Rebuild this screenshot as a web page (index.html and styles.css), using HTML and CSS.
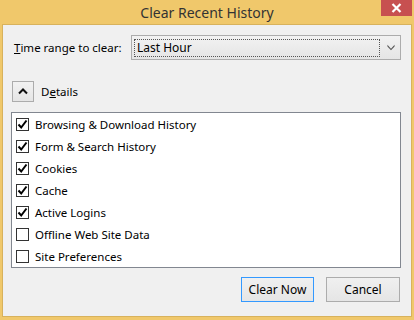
FILE: index.html
```html
<!DOCTYPE html>
<html>
<head>
<meta charset="utf-8">
<link rel="stylesheet" href="styles.css">
</head>
<body>
<div class="window">
  <div class="titlebar">
    <span class="title">Clear Recent History</span>
    <div class="close">
      <svg width="11" height="10" viewBox="0 0 11 10"><path d="M1.5 1 L9.5 9 M9.5 1 L1.5 9" stroke="#fff" stroke-width="2.2" fill="none"/></svg>
    </div>
  </div>
  <div class="client">
    <div class="range-row">
      <label class="range-label"><u>T</u>ime range to clear:</label>
      <div class="select">
        <div class="focus">Last Hour</div>
        <svg class="arrow" width="9" height="7" viewBox="0 0 9 7"><path d="M0.5 0.5 L4.5 5 L8.5 0.5 L8.5 2.5 L4.5 6.5 L0.5 2.5 Z" fill="#555"/></svg>
      </div>
    </div>
    <div class="details-row">
      <div class="details-btn">
        <svg width="10" height="7" viewBox="0 0 10 7"><path d="M1 5.5 L5 1.5 L9 5.5" stroke="#111" stroke-width="2" fill="none"/></svg>
      </div>
      <span class="details-label">D<u>e</u>tails</span>
    </div>
    <div class="list">
      <div class="item"><span class="cb checked"><svg width="11" height="11" viewBox="0 0 11 11"><path d="M1.5 5.5 L4.2 8.5 L9.5 1.5" stroke="#000" stroke-width="2" fill="none"/></svg></span>Browsing &amp; Download History</div>
      <div class="item"><span class="cb checked"><svg width="11" height="11" viewBox="0 0 11 11"><path d="M1.5 5.5 L4.2 8.5 L9.5 1.5" stroke="#000" stroke-width="2" fill="none"/></svg></span>Form &amp; Search History</div>
      <div class="item"><span class="cb checked"><svg width="11" height="11" viewBox="0 0 11 11"><path d="M1.5 5.5 L4.2 8.5 L9.5 1.5" stroke="#000" stroke-width="2" fill="none"/></svg></span>Cookies</div>
      <div class="item"><span class="cb checked"><svg width="11" height="11" viewBox="0 0 11 11"><path d="M1.5 5.5 L4.2 8.5 L9.5 1.5" stroke="#000" stroke-width="2" fill="none"/></svg></span>Cache</div>
      <div class="item"><span class="cb checked"><svg width="11" height="11" viewBox="0 0 11 11"><path d="M1.5 5.5 L4.2 8.5 L9.5 1.5" stroke="#000" stroke-width="2" fill="none"/></svg></span>Active Logins</div>
      <div class="item"><span class="cb"></span>Offline Web Site Data</div>
      <div class="item"><span class="cb"></span>Site Preferences</div>
    </div>
    <div class="buttons">
      <button class="btn default">Clear Now</button>
      <button class="btn">Cancel</button>
    </div>
  </div>
</div>
</body>
</html>
```

FILE: styles.css
```css
html, body {
  margin: 0;
  padding: 0;
}
body {
  width: 414px;
  height: 320px;
  background: #f0c86b;
  font-family: "Noto Sans", "Open Sans", sans-serif;
  font-size: 11.5px;
  color: #000;
  overflow: hidden;
}
.window {
  width: 414px;
  height: 320px;
  display: flex;
  flex-direction: column;
  position: relative;
}
.titlebar {
  height: 24px;
  display: flex;
  align-items: center;
  justify-content: center;
  flex: none;
}
.title {
  font-size: 14px;
  color: #333;
  margin-top: 1px;
}
.close {
  position: absolute;
  top: 0;
  left: 381px;
  width: 31px;
  height: 16px;
  background: #c75050;
  display: flex;
  align-items: center;
  justify-content: center;
}
.client {
  margin: 0 2px 3px 2px;
  flex: 1;
  background: #f0f0f0;
  border: 1px solid #d8b25c;
  display: flex;
  flex-direction: column;
  padding: 0 10px 0 8px;
}
.range-row {
  display: flex;
  align-items: center;
  margin-top: 10px;
  height: 25px;
}
.range-label {
  margin-left: 3px;
  width: 117px;
  flex: none;
  color: #000;
}
.select {
  flex: none;
  width: 261px;
  height: 23px;
  border: 1px solid #acacac;
  background: linear-gradient(#f2f2f2, #e5e5e5);
  display: flex;
  align-items: center;
  padding: 0 5px 0 2px;
  box-sizing: content-box;
}
.focus {
  width: 242px;
  height: 16px;
  border: 1px dotted #555;
  line-height: 16px;
  padding-left: 2px;
  font-size: 12px;
  flex: none;
}
.arrow {
  margin-left: 7px;
}
.details-row {
  display: flex;
  align-items: center;
  margin-top: 21px;
  height: 21px;
}
.details-btn {
  margin-left: 1px;
  width: 20px;
  height: 19px;
  border: 1px solid #acacac;
  background: linear-gradient(#f2f2f2, #e5e5e5);
  display: flex;
  align-items: center;
  justify-content: center;
}
.details-label {
  margin-left: 7px;
}
.list {
  margin-top: 10px;
  height: 153px;
  border: 1px solid #828790;
  background: #fff;
  padding-top: 1px;
  display: flex;
  flex-direction: column;
}
.item {
  height: 22px;
  display: flex;
  align-items: center;
  padding-left: 4px;
}
.cb {
  width: 11px;
  height: 11px;
  border: 1px solid #333;
  background: #fff;
  margin-right: 6px;
  display: flex;
  align-items: center;
  justify-content: center;
  flex: none;
}
.buttons {
  display: flex;
  justify-content: flex-end;
  gap: 12px;
  margin-top: 9px;
  padding-right: 1px;
}
.btn {
  width: 74px;
  height: 25px;
  border: 1px solid #acacac;
  background: linear-gradient(#f0f0f0, #e5e5e5);
  font-family: "Noto Sans", "Open Sans", sans-serif;
  font-size: 12px;
  color: #000;
  padding: 0;
  margin: 0;
}
.btn.default {
  border-color: #3399ff;
  width: 73px;
}
```
